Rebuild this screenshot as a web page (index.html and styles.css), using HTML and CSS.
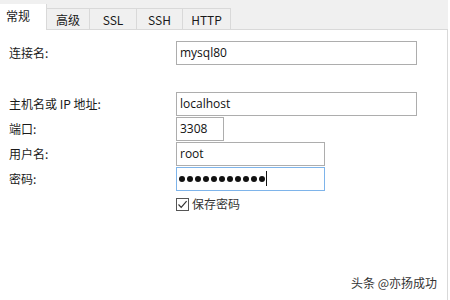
FILE: index.html
```html
<!DOCTYPE html>
<html lang="zh">
<head>
<meta charset="utf-8">
<link rel="stylesheet" href="styles.css">
</head>
<body>
<div class="window">
  <div class="tabs">
    <div class="tab active">常规</div>
    <div class="tab">高级</div>
    <div class="tab">SSL</div>
    <div class="tab">SSH</div>
    <div class="tab">HTTP</div>
  </div>
  <div class="panel">
    <div class="form">
      <div class="row first">
        <label class="label">连接名:</label>
        <div class="input w-long">mysql80</div>
      </div>
      <div class="row spaced">
        <label class="label">主机名或 IP 地址:</label>
        <div class="input w-long">localhost</div>
      </div>
      <div class="row">
        <label class="label">端口:</label>
        <div class="input w-short">3308</div>
      </div>
      <div class="row">
        <label class="label">用户名:</label>
        <div class="input w-mid">root</div>
      </div>
      <div class="row">
        <label class="label">密码:</label>
        <div class="input w-mid focused">
          <span class="dots"><i></i><i></i><i></i><i></i><i></i><i></i><i></i><i></i><i></i><i></i><i></i></span><span class="caret"></span>
        </div>
      </div>
      <div class="row check-row">
        <span class="label"></span>
        <div class="check">
          <span class="box"><svg width="11" height="11" viewBox="0 0 11 11"><path d="M1.5 5.5 L4.2 8.3 L9.6 2.2" fill="none" stroke="#333" stroke-width="1.2"/></svg></span>
          <span class="check-text">保存密码</span>
        </div>
      </div>
    </div>
    <div class="watermark">头条 @亦扬成功</div>
  </div>
</div>
</body>
</html>
```

FILE: styles.css
```css
html, body {
  margin: 0;
  padding: 0;
  background: #ffffff;
}
body {
  font-family: "Noto Sans CJK SC", "Noto Sans", sans-serif;
  font-size: 12px;
  color: #1a1a1a;
  width: 450px;
  height: 300px;
  overflow: hidden;
}
.window {
  display: flex;
  flex-direction: column;
  width: 448px;
  height: 300px;
}
.tabs {
  display: flex;
  align-items: flex-end;
  height: 29px;
  background: #f0f0f0;
  flex: none;
  position: relative;
  z-index: 1;
}
.tab {
  box-sizing: border-box;
  height: 21px;
  width: 46px;
  border: 1px solid #d9d9d9;
  border-left: none;
  border-bottom: none;
  background: #f0f0f0;
  display: flex;
  align-items: center;
  justify-content: center;
  line-height: 1;
  padding-top: 1px;
}
.tab:nth-child(2) { width: 43px; }
.tab:nth-child(3) { width: 47px; }
.tab:nth-child(4) { width: 46px; }
.tab:nth-child(5) { width: 48px; }
.tab.active {
  height: 26px;
  width: 47px;
  background: #ffffff;
  margin-bottom: -1px;
  border: none;
  border-right: 1px solid #d9d9d9;
  justify-content: flex-start;
  padding-left: 6px;
  padding-bottom: 3px;
}
.panel {
  flex: 1;
  background: #ffffff;
  border-top: 1px solid #d9d9d9;
  border-right: 1px solid #d9d9d9;
  position: relative;
}
.form {
  display: flex;
  flex-direction: column;
  gap: 1px;
  padding-top: 11px;
}
.row {
  display: flex;
  align-items: center;
  height: 24px;
}
.row.spaced { margin-top: 26px; }
.label {
  width: 176px;
  flex: none;
  box-sizing: border-box;
  padding-left: 9px;
  padding-bottom: 2px;
}
.input {
  box-sizing: border-box;
  height: 24px;
  border: 1px solid #adadad;
  padding-left: 3px;
  display: flex;
  align-items: center;
  font-family: "Open Sans", "Noto Sans CJK SC", sans-serif;
  font-size: 12px;
  color: #111;
  padding-bottom: 1px;
}
.w-long { width: 241px; }
.w-short { width: 48px; }
.w-mid { width: 149px; }
.input.focused {
  border-color: #7eb4ea;
  padding-left: 2px;
}
.dots {
  display: flex;
  gap: 2px;
}
.dots i {
  display: block;
  width: 6px;
  height: 6px;
  border-radius: 50%;
  background: #111;
}
.caret {
  display: block;
  width: 1px;
  height: 15px;
  background: #111;
  margin-left: 1px;
}
.check-row {
  margin-top: 4px;
  height: 16px;
}
.check {
  display: flex;
  align-items: center;
  gap: 3px;
}
.box {
  box-sizing: border-box;
  width: 13px;
  height: 13px;
  border: 1px solid #555;
  background: #fff;
  display: flex;
  align-items: center;
  justify-content: center;
}
.box svg { display: block; }
.check-text {
  color: #333;
  padding-bottom: 1px;
}
.watermark {
  position: absolute;
  right: 10px;
  bottom: 9px;
  color: #333;
  font-size: 12px;
}
```
